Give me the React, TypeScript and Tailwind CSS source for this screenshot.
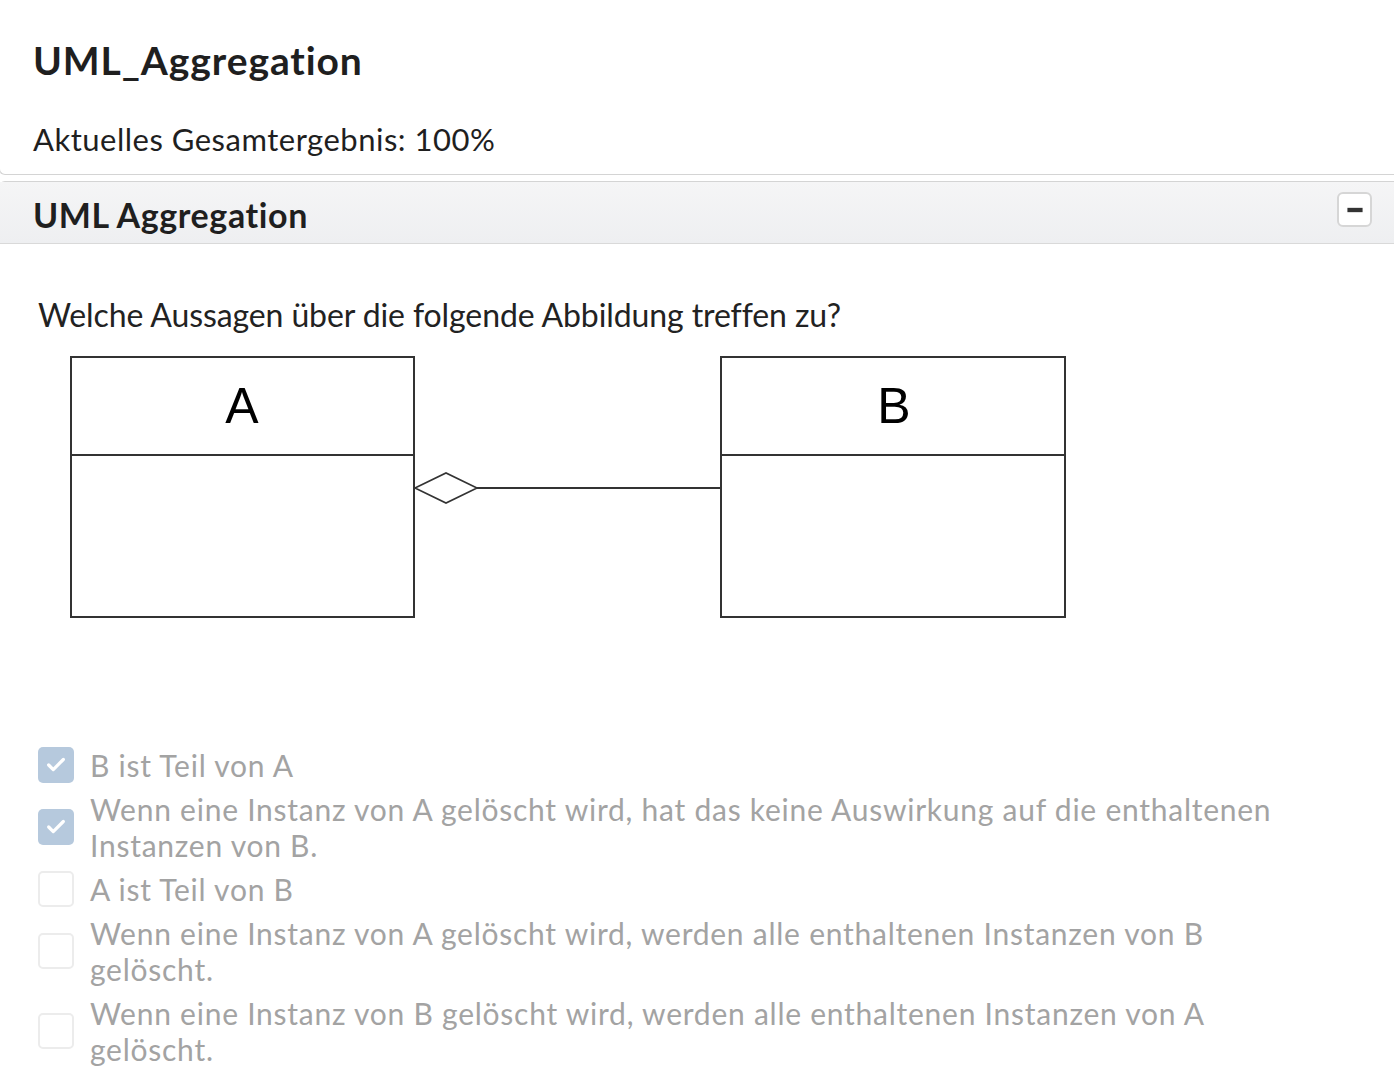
import { Check, Minus } from "lucide-react";

const options = [
  { text: "B ist Teil von A", checked: true },
  {
    text: "Wenn eine Instanz von A gelöscht wird, hat das keine Auswirkung auf die enthaltenen Instanzen von B.",
    checked: true,
  },
  { text: "A ist Teil von B", checked: false },
  {
    text: "Wenn eine Instanz von A gelöscht wird, werden alle enthaltenen Instanzen von B gelöscht.",
    checked: false,
  },
  {
    text: "Wenn eine Instanz von B gelöscht wird, werden alle enthaltenen Instanzen von A gelöscht.",
    checked: false,
  },
];

function Diagram() {
  return (
    <svg width="1000" height="265" viewBox="0 0 1000 265" className="block">
      <g fill="none" stroke="#333" strokeWidth="2">
        <rect x="1" y="1" width="343" height="260" />
        <line x1="1" y1="99" x2="344" y2="99" />
        <rect x="651" y="1" width="344" height="260" />
        <line x1="651" y1="99" x2="995" y2="99" />
        <polygon points="345,132 376,117 407,132 376,147" strokeWidth="1.6" />
        <line x1="407" y1="132" x2="651" y2="132" />
      </g>
      <text x="172" y="67" textAnchor="middle" fontFamily="'Liberation Sans', Arial, sans-serif" fontSize="50" fill="#000">
        A
      </text>
      <text x="824" y="67" textAnchor="middle" fontFamily="'Liberation Sans', Arial, sans-serif" fontSize="50" fill="#000">
        B
      </text>
    </svg>
  );
}

export default function App() {
  return (
    <div
      className="min-h-screen overflow-hidden bg-white text-[#1f1f1f] [font-variant-ligatures:none]"
      style={{ fontFamily: "Lato, 'Open Sans', sans-serif" }}
    >
      <div className="ml-[-1px] h-[175px] rounded-bl-md border-b border-l border-[#d4d4d4] pl-[33px] pt-[37px]">
        <h1 className="text-[39px] font-bold leading-[1.2] tracking-[0.9px]">UML_Aggregation</h1>
        <p className="mt-[37px] text-[31px] leading-[1.2] tracking-[0.5px]">Aktuelles Gesamtergebnis: 100%</p>
      </div>

      <div className="ml-[-1px] mt-[6px] rounded-tl-md border-l border-t border-[#d4d4d4]">
        <div className="flex h-[62px] items-center justify-between border-b border-[#d9d9d9] bg-gradient-to-b from-[#f5f5f6] to-[#eeeff1] pl-[33px] pr-[22px]">
          <h2 className="mt-[6px] text-[34px] font-bold leading-[1.2] tracking-[0.6px]">UML Aggregation</h2>
          <button
            type="button"
            className="-mt-[6px] flex h-[35px] w-[35px] items-center justify-center rounded-md border-2 border-[#d6d6d6] bg-white"
          >
            <Minus size={26} strokeWidth={4} className="text-[#333]" strokeLinecap="butt" />
          </button>
        </div>
      </div>

      <div className="px-[38px] pt-[52px]">
        <p className="text-[32px] leading-[1.2] tracking-[-0.1px] text-[#222]">
          Welche Aussagen über die folgende Abbildung treffen zu?
        </p>
        <div className="ml-[32px] mt-[22px]">
          <Diagram />
        </div>

        <div className="mt-[126px] flex flex-col gap-[8px]">
          {options.map((option) => (
            <label key={option.text} className="flex items-center gap-[16px]">
              <span
                className={
                  option.checked
                    ? "flex h-[36px] w-[36px] shrink-0 items-center justify-center rounded-[5px] bg-[#b6c9dd]"
                    : "h-[36px] w-[36px] shrink-0 rounded-[5px] border-2 border-[#ececec] bg-white"
                }
              >
                {option.checked && <Check size={22} strokeWidth={3.5} className="text-white" />}
              </span>
              <span className="max-w-[1200px] text-[30px] leading-[36px] tracking-[0.75px] text-[#a3a3a3]">
                {option.text}
              </span>
            </label>
          ))}
        </div>
      </div>
    </div>
  );
}
